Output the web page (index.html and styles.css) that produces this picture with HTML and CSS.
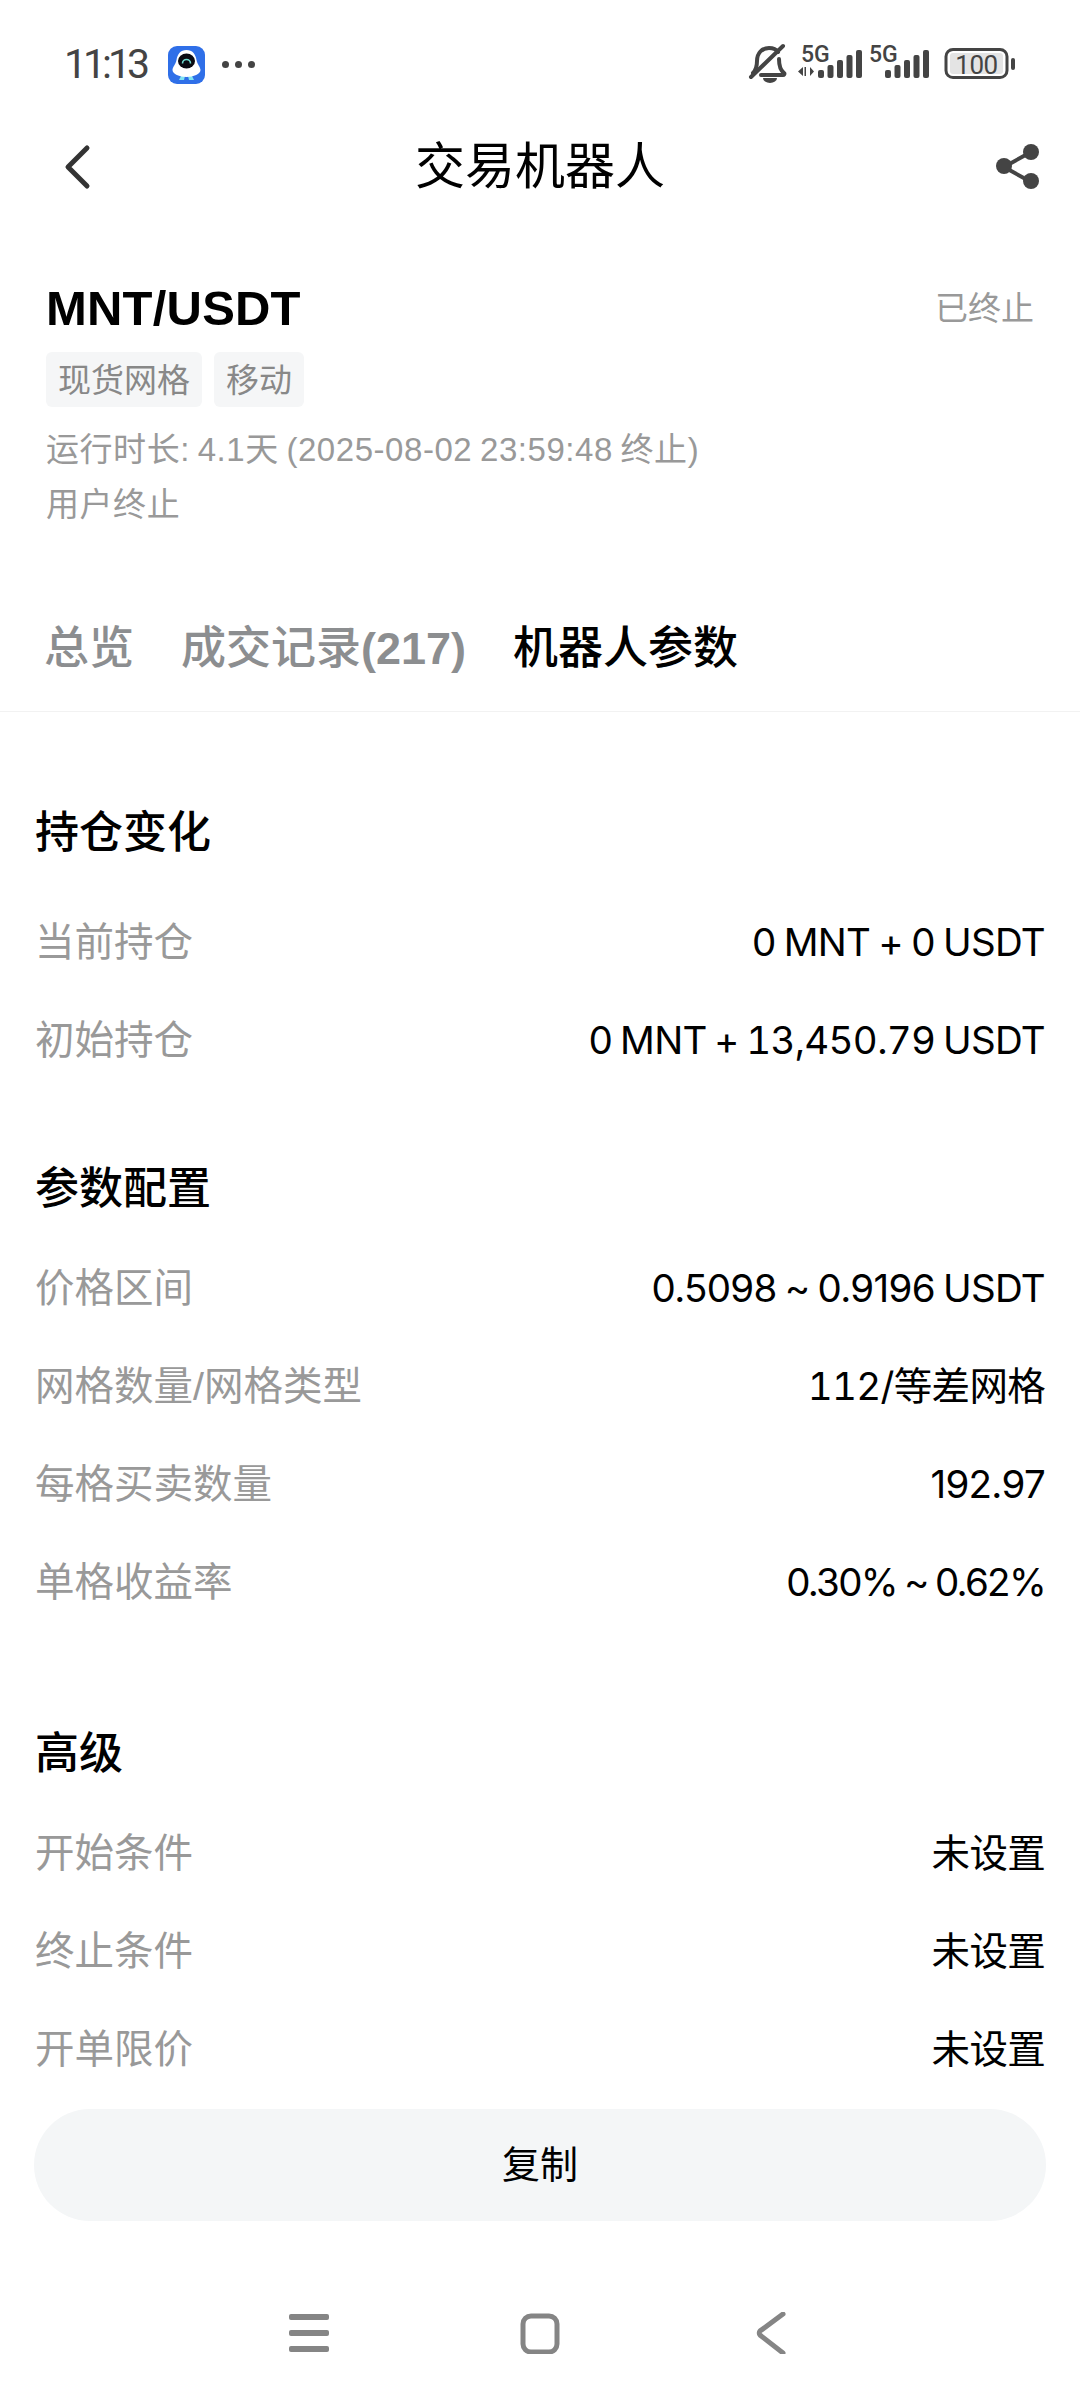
FILE: index.html
```html
<!DOCTYPE html>
<html lang="zh-CN">
<head>
    <meta charset="UTF-8">
    <title>交易机器人</title>
    <meta name="viewport" content="width=device-width">
    <link rel="stylesheet" href="styles.css">
</head>
<body>
<div class="page">
    <div class="status-bar">
        <div class="status-left">
            <span class="status-time">11:13</span>
            <svg class="app-logo" viewBox="0 0 37 38">
                <rect width="37" height="38" rx="9" fill="#2f6fe8"/>
                <path d="M13 30l-2 4h5l1-4zM20 30l1 4h5l-2-4z" fill="#7fe3f2"/>
                <path d="M18.500 4c6 0 9 4 10 10 1 5 4 7 4 10 0 4-7 7-14 7S4.500 28 4.500 24c0-3 3-5 4-10 1-6 4-10 10-10z" fill="#fff"/>
                <ellipse cx="18.500" cy="15" rx="8.500" ry="7.500" fill="#0a0a12"/>
                <path d="M14.500 17.500a4 4 0 0 1 8 0" fill="none" stroke="#6fdad0" stroke-width="1.600"/>
            </svg>
            <span class="status-dots"><i></i><i></i><i></i></span>
        </div>
        <svg class="status-right" viewBox="0 -10 270 54">
            <g fill="none" stroke="#444" stroke-width="4" stroke-linecap="round" stroke-linejoin="round">
                <path d="M6 31c3-3 4-6 4-12 0-8 5-13 12-13 4 0 7 1 9 4M32 17c0 6 1 11 5 14 1 1 0 2-1 2H14"/>
                <path d="M4 35L36 4"/>
            </g>
            <path d="M16 36h14a7 5 0 0 1-14 0z" fill="#444"/>
            <text x="54" y="20" class="net-label">5G</text>
            <text x="122" y="20" class="net-label">5G</text>
            <g fill="#444">
                <path d="M56 34l-5-4.500 5-4.500zM59 25v9h-1.500v-9zM63 25l4 4.500-4 4.500z"/>
                <rect x="71" y="28" width="6" height="8" rx="2"/>
                <rect x="80.500" y="23" width="6" height="13" rx="2"/>
                <rect x="90" y="18" width="6" height="18" rx="2"/>
                <rect x="99.500" y="13" width="6" height="23" rx="2"/>
                <rect x="109" y="8" width="6" height="28" rx="2"/>
                <rect x="138" y="28" width="6" height="8" rx="2"/>
                <rect x="147.500" y="23" width="6" height="13" rx="2"/>
                <rect x="157" y="18" width="6" height="18" rx="2"/>
                <rect x="166.500" y="13" width="6" height="23" rx="2"/>
                <rect x="176" y="8" width="6" height="28" rx="2"/>
            </g>
            <rect x="199" y="7.500" width="61" height="28" rx="7" fill="none" stroke="#444" stroke-width="3"/>
            <rect x="203" y="11" width="53" height="21" rx="3" fill="#e4e4e4"/>
            <rect x="264" y="16" width="4" height="12" rx="2" fill="#444"/>
            <text x="229.500" y="31.500" class="battery-label">100</text>
        </svg>
    </div>

    <div class="nav-bar">
        <svg class="nav-back" viewBox="0 0 30 48">
            <path d="M25 5L6 24l19 19" fill="none" stroke="#333" stroke-width="5" stroke-linecap="round" stroke-linejoin="round"/>
        </svg>
        <h1 class="nav-title">交易机器人</h1>
        <svg class="nav-share" viewBox="0 0 44 46">
            <g fill="none" stroke="#444" stroke-width="4">
                <path d="M35 8L8 23l27 15"/>
            </g>
            <g fill="#444">
                <circle cx="35" cy="8" r="8"/>
                <circle cx="8" cy="22" r="8"/>
                <circle cx="35" cy="37" r="8"/>
            </g>
        </svg>
    </div>

    <div class="summary">
        <div class="summary-head">
            <span class="pair">MNT/USDT</span>
            <span class="state">已终止</span>
        </div>
        <div class="tags">
            <span class="tag">现货网格</span>
            <span class="tag">移动</span>
        </div>
        <div class="meta first">运行时长: 4.1天 (2025-08-02 23:59:48 终止)</div>
        <div class="meta">用户终止</div>
    </div>

    <div class="tabs">
        <span class="tab">总览</span>
        <span class="tab">成交记录<b>(217)</b></span>
        <span class="tab active">机器人参数</span>
    </div>

    <div class="content">
        <section class="section section-hold">
            <h2>持仓变化</h2>
            <div class="row"><span class="label">当前持仓</span><span class="value">0 MNT + 0 USDT</span></div>
            <div class="row"><span class="label">初始持仓</span><span class="value value-tab">0 MNT + 13,450.79 USDT</span></div>
        </section>
        <section class="section section-params">
            <h2>参数配置</h2>
            <div class="row"><span class="label">价格区间</span><span class="value">0.5098 ~ 0.9196 USDT</span></div>
            <div class="row"><span class="label">网格数量/网格类型</span><span class="value value-tab">112/等差网格</span></div>
            <div class="row"><span class="label">每格买卖数量</span><span class="value">192.97</span></div>
            <div class="row"><span class="label">单格收益率</span><span class="value value-tight">0.30% ~ 0.62%</span></div>
        </section>
        <section class="section section-adv">
            <h2>高级</h2>
            <div class="row"><span class="label">开始条件</span><span class="value">未设置</span></div>
            <div class="row"><span class="label">终止条件</span><span class="value">未设置</span></div>
            <div class="row"><span class="label">开单限价</span><span class="value">未设置</span></div>
        </section>
    </div>

    <div class="footer">
        <button class="copy-btn">复制</button>
        <div class="sys-nav">
            <svg viewBox="0 0 40 40">
                <g fill="#858585">
                    <rect y="1" width="40" height="6" rx="2"/>
                    <rect y="17" width="40" height="6" rx="2"/>
                    <rect y="33" width="40" height="6" rx="2"/>
                </g>
            </svg>
            <svg viewBox="0 0 40 40">
                <rect x="3" y="3" width="34" height="36" rx="8" fill="none" stroke="#858585" stroke-width="5"/>
            </svg>
            <svg viewBox="0 0 40 40">
                <path d="M32 1L9 18c-1 1-1 3 0 4l23 18" fill="none" stroke="#858585" stroke-width="5" stroke-linecap="round"/>
            </svg>
        </div>
    </div>
</div>
</body>
</html>
```

FILE: styles.css
```css
*,
*::after,
*::before{
    padding: 0;
    margin: 0;
    box-sizing: border-box;
}
html{
    font: normal 40px/1.5 "Liberation Sans", "Noto Sans CJK SC", sans-serif;
}
body{
    background: #fff;
    color: #000;
}
.page{
    width: 1080px;
    height: 2400px;
    display: flex;
    flex-direction: column;
    overflow: hidden;
}

/* status bar */
.status-bar{
    height: 123px;
    padding: 32px 65px 0 64px;
    display: flex;
    justify-content: space-between;
    align-items: flex-start;
}
.status-left{
    display: flex;
    align-items: center;
    height: 44px;
    margin-top: 10px;
}
.status-time{
    font: 41px/44px Roboto, sans-serif;
    letter-spacing: -4px;
    color: #444;
    width: 104px;
}
.app-logo{
    width: 37px;
    height: 38px;
    margin-top: 2px;
}
.status-dots{
    display: flex;
    gap: 6px;
    margin-left: 17px;
}
.status-dots i{
    width: 7px;
    height: 7px;
    border-radius: 50%;
    background: #444;
}
.status-right{
    width: 270px;
    height: 54px;
    margin-right: -2px;
}
.net-label{
    font: 500 23px Roboto, sans-serif;
    fill: #444;
}
.battery-label{
    font: 26px Roboto, sans-serif;
    fill: #444;
    text-anchor: middle;
    letter-spacing: -0.5px;
}

/* title bar */
.nav-bar{
    height: 88px;
    padding: 0 40px;
    display: grid;
    grid-template-columns: 1fr auto 1fr;
    align-items: center;
}
.nav-back{
    width: 30px;
    height: 48px;
    margin-left: 22px;
}
.nav-title{
    font-size: 50px;
    font-weight: 400;
    line-height: 60px;
}
.nav-share{
    width: 44px;
    height: 46px;
    justify-self: end;
}

/* summary */
.summary{
    padding: 68px 46px 0;
}
.summary-head{
    display: flex;
    justify-content: space-between;
    align-items: center;
    height: 60px;
}
.pair{
    font-size: 49px;
    font-weight: 700;
    letter-spacing: 0.2px;
}
.state{
    font-size: 33px;
    color: #999;
}
.tags{
    display: flex;
    gap: 12px;
    margin-top: 13px;
}
.tag{
    height: 55px;
    padding: 2px 12px 0;
    font-size: 33px;
    line-height: 53px;
    color: #888;
    background: #f5f6f7;
    border-radius: 6px;
}
.meta{
    font-size: 33px;
    line-height: 55px;
    letter-spacing: 0.55px;
    word-spacing: -2px;
    color: #999;
}
.meta.first{
    margin-top: 15px;
}

/* tabs */
.tabs{
    margin-top: 53px;
    height: 127px;
    padding: 2px 44px 0;
    display: flex;
    gap: 47px;
    align-items: center;
    border-bottom: 1px solid #f2f2f2;
}
.tab{
    font-size: 45px;
    font-weight: 500;
    color: #8c8e90;
}
.tab b{
    font-weight: 700;
}
.tab.active{
    color: #000;
}

/* parameter list */
.content{
    flex: 1;
    overflow: hidden;
    padding: 0 35px;
}
.section h2{
    font-size: 44px;
    font-weight: 500;
    line-height: 60px;
}
.section-hold{
    padding-top: 91px;
}
.section-params{
    padding-top: 69px;
}
.section-adv{
    padding-top: 92px;
}
.section-hold h2{
    margin-bottom: 31px;
}
.section-params h2{
    margin-bottom: 21px;
}
.section-adv h2{
    margin-bottom: 21px;
}
.row{
    height: 98px;
    display: flex;
    justify-content: space-between;
    align-items: center;
}
.label{
    color: #999;
    font-size: 39.5px;
}
.value{
    font: 38.5px/1.5 Inter, "Noto Sans CJK SC", sans-serif;
    letter-spacing: -0.7px;
    word-spacing: -2px;
}
.value-tab{
    font-variant-numeric: tabular-nums;
}
.value-tight{
    letter-spacing: -1.7px;
}

/* bottom */
.footer{
    height: 298px;
    padding-top: 7px;
}
.copy-btn{
    display: block;
    width: 1012px;
    height: 112px;
    margin: 0 34px;
    border: none;
    border-radius: 56px;
    background: #f4f6f7;
    font: inherit;
    font-size: 38px;
    color: #000;
}
.sys-nav{
    margin-top: 91px;
    display: flex;
    justify-content: center;
    gap: 191px;
}
.sys-nav svg{
    width: 40px;
    height: 42px;
}
```
